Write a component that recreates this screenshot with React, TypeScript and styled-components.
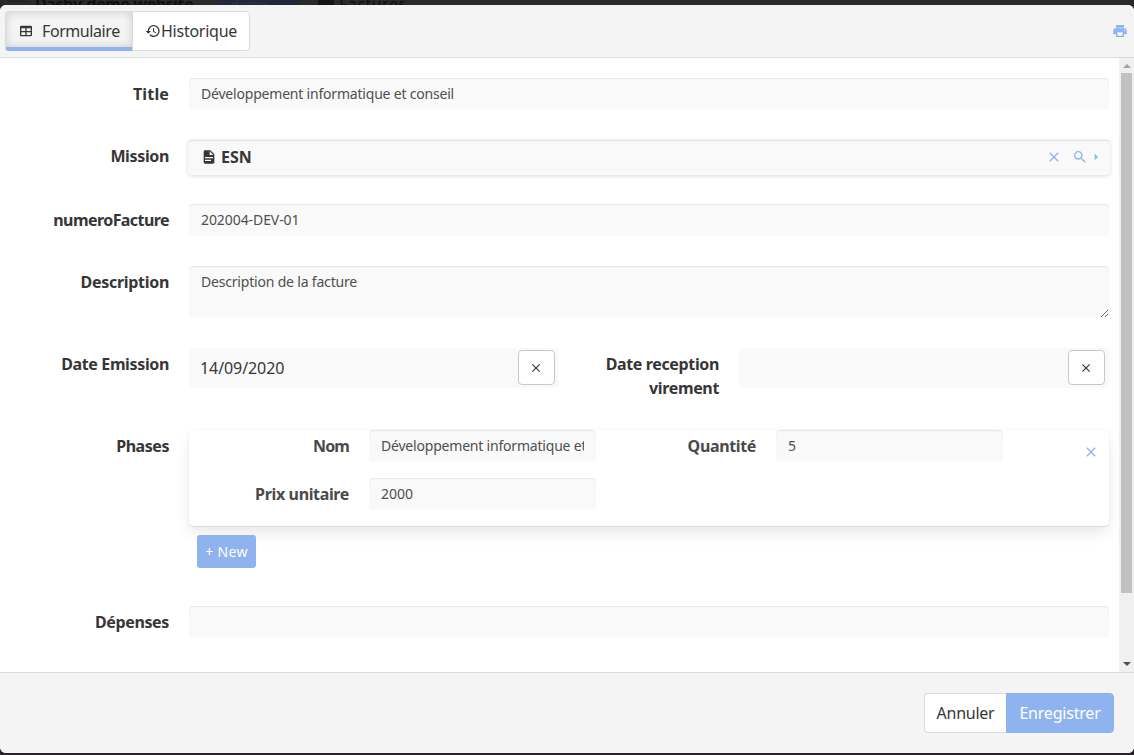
import React from 'react';
import styled, { createGlobalStyle, css } from 'styled-components';

const BLUE = '#8fb3ee';

const Global = createGlobalStyle`
  *, *::before, *::after { box-sizing: border-box; }
  body { margin: 0; background: #262426; font-family: "Noto Sans", "Open Sans", sans-serif; color: #363636; }
  button, input, textarea { font-family: inherit; }
`;

const Page = styled.div`
  width: 1134px;
  height: 755px;
  overflow: hidden;
  display: flex;
  flex-direction: column;
`;

/* Dimmed strip of the page behind the dialog */
const Backdrop = styled.div`
  height: 5px;
  flex: none;
  overflow: hidden;
  background: #2a2a2a;
  display: flex;
  align-items: flex-start;
  color: #101010;
  font-size: 16px;
  line-height: 24px;
  white-space: nowrap;
`;
const Burger = styled.span`
  width: 18px;
  height: 2px;
  margin: 0 9px 0 8px;
  background: #1f2430;
`;
const SiteName = styled.b`
  width: 183px;
  margin-top: -8px;
  letter-spacing: -0.45px;
`;
const DemoTag = styled.span`
  width: 82px;
  height: 24px;
  margin-top: -8px;
  padding-left: 13px;
  border-radius: 4px;
  background: #222838;
  color: #30333b;
  font-size: 13px;
`;
const PageName = styled.span`
  display: flex;
  gap: 5px;
  margin: -8px 0 0 18px;
  letter-spacing: 0.5px;
  &::before { content: ''; width: 16px; height: 13px; background: #161414; }
`;

const Dialog = styled.section`
  height: 748px;
  flex: none;
  display: flex;
  flex-direction: column;
  border-radius: 6px;
  overflow: hidden;
  background: #fff;
`;
const Header = styled.header`
  height: 53px;
  flex: none;
  display: flex;
  align-items: center;
  justify-content: space-between;
  padding: 0 6px 0 5px;
  background: #f4f4f4;
  border-bottom: 1px solid #dbdbdb;
`;
const Tabs = styled.div`
  display: flex;
`;
const Tab = styled.button<{ $active?: boolean }>`
  height: 40px;
  width: ${p => (p.$active ? 128 : 118)}px;
  padding: 0 0 0 12px;
  display: flex;
  align-items: center;
  border: 1px solid #dbdbdb;
  background: #fff;
  color: #363636;
  font-size: 16px;
  border-radius: 0 4px 4px 0;
  ${p => p.$active && css`
    border-radius: 4px 0 0 4px;
    border-bottom: 4px solid ${BLUE};
    border-right-color: #d5d5d5;
    padding: 3px 0 0 12px;
    margin-right: -1px;
    background: #f4f4f4;
    box-shadow: inset 0 0 8px rgba(10, 10, 10, 0.16);
  `}
`;
const Text = styled.span<{ $ls?: number }>`
  letter-spacing: ${p => p.$ls ?? 0}px;
  white-space: nowrap;
`;
const IconSvg = styled.svg<{ $gap?: number }>`
  display: block;
  flex: none;
  fill: currentColor;
  margin-right: ${p => p.$gap ?? 0}px;
`;
const Link = styled.a`
  display: flex;
  color: ${BLUE};
`;

const Body = styled.main`
  height: 614px;
  flex: none;
  display: flex;
`;
const Form = styled.form`
  width: 1119px;
  flex: none;
  display: flex;
  flex-direction: column;
  padding: 20px 10px 0 0;
`;
const Row = styled.div<{ $h: number; $gap?: number }>`
  display: flex;
  align-items: flex-start;
  height: ${p => p.$h}px;
  flex: none;
  margin-bottom: ${p => p.$gap ?? 30}px;
`;
const Label = styled.label<{ $w?: number; $ls?: number; $soft?: boolean }>`
  width: ${p => p.$w ?? 169}px;
  flex: none;
  margin-right: 20px;
  padding-top: 4px;
  text-align: right;
  font-size: 16px;
  line-height: 24px;
  font-weight: 700;
  white-space: nowrap;
  letter-spacing: ${p => p.$ls ?? -0.36}px;
  color: ${p => (p.$soft ? '#4a4a4a' : '#363636')};
`;
const fieldSkin = css`
  background: #f9f9f9;
  border: 0;
  border-radius: 4px;
  box-shadow: inset 0 1px 1px rgba(10, 10, 10, 0.08);
  color: #4f4f4f;
  outline: none;
`;
const Input = styled.input<{ $w?: number; $ls?: number }>`
  ${fieldSkin}
  width: ${p => p.$w ?? 920}px;
  height: 32px;
  padding: 0 12px 2px;
  font-size: 14px;
  letter-spacing: ${p => p.$ls ?? 0}px;
`;
const Area = styled.textarea<{ $ls?: number }>`
  ${fieldSkin}
  width: 920px;
  height: 52px;
  padding: 5px 12px;
  font-size: 14px;
  line-height: 21px;
  letter-spacing: ${p => p.$ls ?? 0}px;
`;
const Reference = styled.div`
  width: 922px;
  flex: none;
  height: 35px;
  margin: 0 0 0 -1px;
  padding: 0 6px 2px 13px;
  display: flex;
  align-items: center;
  border-radius: 4px;
  background: #f9f9f9;
  box-shadow: inset 0 1px 1px rgba(10, 10, 10, 0.1), 0 1px 4px rgba(10, 10, 10, 0.14);
  font-size: 16px;
  font-weight: 700;
`;
const Actions = styled.span`
  margin-left: auto;
  display: flex;
  align-items: center;
  color: ${BLUE};
`;
const DateBox = styled.div<{ $w: number }>`
  width: ${p => p.$w}px;
  height: 40px;
  padding: 0 4px 0 11px;
  display: flex;
  align-items: center;
  justify-content: space-between;
  border-radius: 4px;
  background: #f9f9f9;
  font-size: 16px;
  color: #363636;
`;
const ClearButton = styled.button`
  width: 37px;
  height: 35px;
  margin: 0 0 1px auto;
  padding: 0;
  display: flex;
  align-items: center;
  justify-content: center;
  border: 1px solid #c8c8c8;
  border-radius: 4px;
  background: #fff;
  color: #363636;
`;
const Card = styled.div`
  width: 920px;
  height: 96px;
  display: flex;
  border-radius: 4px;
  background: #fff;
  box-shadow: 0 8px 16px -2px rgba(10, 10, 10, 0.1), 0 0 0 1px rgba(10, 10, 10, 0.02), 0 1px 1px rgba(10, 10, 10, 0.08);
`;
const CardFields = styled.div`
  width: 814px;
  display: grid;
  grid-template-columns: 407px 407px;
  grid-template-rows: 32px 32px;
  row-gap: 16px;
`;
const CardField = styled.div`
  display: flex;
`;
const Remove = styled.a`
  margin: 14px 10px 0 auto;
  height: 16px;
  color: ${BLUE};
`;
const NewButton = styled.button`
  width: 59px;
  height: 33px;
  flex: none;
  margin: -21px 0 38px 197px;
  padding: 0;
  border: 0;
  border-radius: 3px;
  background: ${BLUE};
  color: #fff;
  font-size: 14px;
`;

const Scrollbar = styled.div`
  width: 15px;
  flex: none;
  display: flex;
  flex-direction: column;
  align-items: center;
  background: #f0f0f0;
`;
const Thumb = styled.div`
  width: 11px;
  height: 520px;
  margin-bottom: auto;
  background: #c1c1c1;
`;
const Arrow = styled.span<{ $down?: boolean }>`
  width: 0;
  height: 0;
  border: 4px solid transparent;
  border-top: ${p => (p.$down ? '4px solid #505050' : '0')};
  border-bottom: ${p => (p.$down ? '0' : '4px solid #a3a3a3')};
  margin: ${p => (p.$down ? '0 0 6px' : '6px 0 5px')};
`;

const Footer = styled.footer`
  flex: 1;
  display: flex;
  justify-content: flex-end;
  padding: 20px 20px 0;
  background: #f4f4f4;
  border-top: 1px solid #dbdbdb;
`;
const FootButton = styled.button<{ $primary?: boolean }>`
  width: ${p => (p.$primary ? 108 : 82)}px;
  height: 40px;
  padding: 0;
  font-size: 16px;
  border: 1px solid ${p => (p.$primary ? BLUE : '#dbdbdb')};
  border-right-width: ${p => (p.$primary ? 1 : 0)}px;
  border-radius: ${p => (p.$primary ? '0 4px 4px 0' : '4px 0 0 4px')};
  background: ${p => (p.$primary ? BLUE : '#fff')};
  color: ${p => (p.$primary ? '#fff' : '#363636')};
`;

const paths = {
  table: 'M5,4H19A2,2 0 0,1 21,6V18A2,2 0 0,1 19,20H5A2,2 0 0,1 3,18V6A2,2 0 0,1 5,4M5,8V12H11V8H5M13,8V12H19V8H13M5,14V18H11V14H5M13,14V18H19V14H13Z',
  history: 'M13.5,8H12V13L16.28,15.54L17,14.33L13.5,12.25V8M13,3A9,9 0 0,0 4,12H1L4.96,16.03L9,12H6A7,7 0 0,1 13,5A7,7 0 0,1 20,12A7,7 0 0,1 13,19C11.07,19 9.32,18.21 8.06,16.94L6.64,18.36C8.27,20 10.5,21 13,21A9,9 0 0,0 22,12A9,9 0 0,0 13,3',
  printer: 'M18,3H6V7H18M19,12A1,1 0 0,1 18,11A1,1 0 0,1 19,10A1,1 0 0,1 20,11A1,1 0 0,1 19,12M16,19H8V14H16M19,8H5A3,3 0 0,0 2,11V17H6V21H18V17H22V11A3,3 0 0,0 19,8Z',
  file: 'M13,9H18.5L13,3.5V9M6,2H14L20,8V20A2,2 0 0,1 18,22H6C4.89,22 4,21.1 4,20V4C4,2.89 4.89,2 6,2M15,18V16H6V18H15M18,14V12H6V14H18Z',
  search: 'M9.5,3A6.5,6.5 0 0,1 16,9.5C16,11.11 15.41,12.59 14.44,13.73L14.71,14H15.5L20.5,19L19,20.5L14,15.5V14.71L13.73,14.44C12.59,15.41 11.11,16 9.5,16A6.5,6.5 0 0,1 3,9.5A6.5,6.5 0 0,1 9.5,3M9.5,5C7,5 5,7 5,9.5C5,12 7,14 9.5,14C12,14 14,12 14,9.5C14,7 12,5 9.5,5Z',
  close: 'M19,6.41L17.59,5L12,10.59L6.41,5L5,6.41L10.59,12L5,17.59L6.41,19L12,13.41L17.59,19L19,17.59L13.41,12L19,6.41Z',
  right: 'M10,17L15,12L10,7V17Z',
};

const Icon = ({ name, size = 16, gap = 0 }: { name: keyof typeof paths; size?: number; gap?: number }) => (
  <IconSvg width={size} height={size} viewBox="0 0 24 24" $gap={gap}>
    <path d={paths[name]} />
  </IconSvg>
);

export default function App() {
  return (
    <Page>
      <Global />
      <Backdrop>
        <Burger />
        <SiteName>Dashy-demo website</SiteName>
        <DemoTag>demo</DemoTag>
        <PageName>Factures</PageName>
      </Backdrop>
      <Dialog>
        <Header>
          <Tabs>
            <Tab $active><Icon name="table" gap={8} /><Text $ls={-0.42}>Formulaire</Text></Tab>
            <Tab><Icon name="history" /><Text $ls={-0.25}>Historique</Text></Tab>
          </Tabs>
          <Link><Icon name="printer" /></Link>
        </Header>
        <Body>
          <Form>
            <Row $h={32}>
              <Label $ls={0.15}>Title</Label>
              <Input $ls={-0.2} defaultValue="Développement informatique et conseil" />
            </Row>
            <Row $h={34}>
              <Label>Mission</Label>
              <Reference>
                <Icon name="file" gap={4} /><Text>ESN</Text>
                <Actions>
                  <Icon name="close" gap={10} />
                  <Icon name="search" />
                  <Icon name="right" />
                </Actions>
              </Reference>
            </Row>
            <Row $h={32}>
              <Label $ls={-0.57}>numeroFacture</Label>
              <Input $ls={-0.08} defaultValue="202004-DEV-01" />
            </Row>
            <Row $h={52}>
              <Label $ls={-0.3}>Description</Label>
              <Area $ls={-0.19} defaultValue="Description de la facture" />
            </Row>
            <Row $h={40} $gap={42}>
              <Label>Date Emission</Label>
              <DateBox $w={370}><Text $ls={-0.08}>14/09/2020</Text><ClearButton type="button"><Icon name="close" size={14} gap={1} /></ClearButton></DateBox>
              <Label $w={160}>Date reception<br />virement</Label>
              <DateBox $w={370}><ClearButton type="button"><Icon name="close" size={14} gap={1} /></ClearButton></DateBox>
            </Row>
            <Row $h={96}>
              <Label $ls={-0.45}>Phases</Label>
              <Card>
                <CardFields>
                  <CardField><Label $w={160} $ls={-0.9} $soft>Nom</Label><Input $w={227} $ls={-0.2} defaultValue="Développement informatique et conseil" /></CardField>
                  <CardField><Label $w={160} $soft>Quantité</Label><Input $w={227} defaultValue="5" /></CardField>
                  <CardField><Label $w={160} $soft>Prix unitaire</Label><Input $w={227} defaultValue="2000" /></CardField>
                </CardFields>
                <Remove><Icon name="close" /></Remove>
              </Card>
            </Row>
            <NewButton type="button"><Text $ls={0.3}>+ New</Text></NewButton>
            <Row $h={32}>
              <Label>Dépenses</Label>
              <Input />
            </Row>
          </Form>
          <Scrollbar><Arrow /><Thumb /><Arrow $down /></Scrollbar>
        </Body>
        <Footer>
          <FootButton><Text $ls={-0.25}>Annuler</Text></FootButton>
          <FootButton $primary><Text $ls={-0.2}>Enregistrer</Text></FootButton>
        </Footer>
      </Dialog>
    </Page>
  );
}
